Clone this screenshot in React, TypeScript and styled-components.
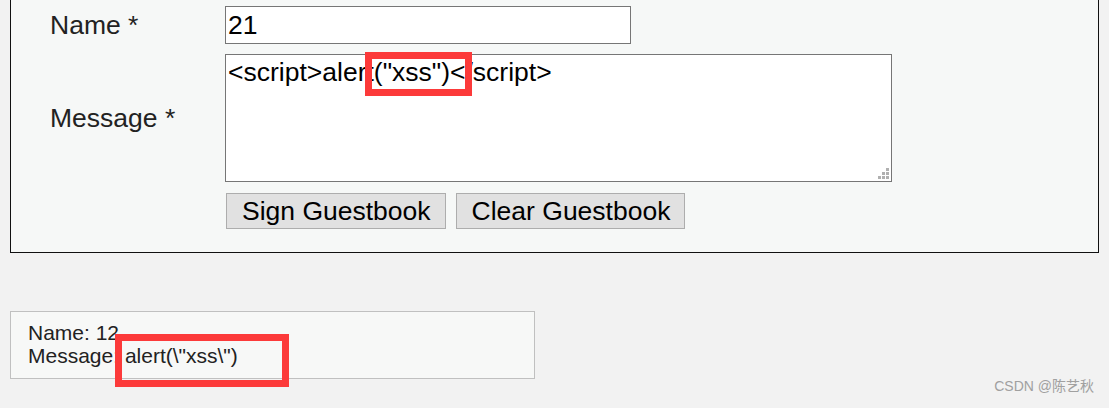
import * as React from 'react';
import styled, { createGlobalStyle } from 'styled-components';

const GlobalStyle = createGlobalStyle`
  html, body {
    margin: 0;
    padding: 0;
    background: #f2f2f2;
    font-family: "Liberation Sans", Arial, sans-serif;
    color: #222;
  }
`;

const Page = styled.div`
  position: relative;
  height: 408px;
  padding: 0 10px;
  overflow: hidden;
  box-sizing: border-box;
`;

const FormPanel = styled.div`
  border: 1px solid #111;
  border-top: none;
  background: #f6f8f7;
  padding: 6px 0 23px 39px;
  display: grid;
  grid-template-columns: 175px 1fr;
  row-gap: 10px;
  align-items: center;
`;

const Label = styled.label`
  font-size: 26.5px;
  color: #222;
`;

const Field = styled.div`
  position: relative;
  display: flex;
  justify-self: start;
`;

const TextInput = styled.input`
  width: 406px;
  height: 38px;
  box-sizing: border-box;
  border: 1px solid #767676;
  padding: 1px 2px;
  font-family: "Liberation Sans", Arial, sans-serif;
  font-size: 26.5px;
  color: #000;
  background: #fff;
  outline: none;
`;

const TextArea = styled.textarea`
  width: 667px;
  height: 128px;
  box-sizing: border-box;
  border: 1px solid #767676;
  padding: 2px 2px;
  font-family: "Liberation Sans", Arial, sans-serif;
  font-size: 26.5px;
  line-height: 30px;
  color: #000;
  background: #fff;
  outline: none;
  resize: none;
`;

const Grip = styled.svg`
  position: absolute;
  right: 3px;
  bottom: 3px;
  width: 11px;
  height: 11px;
  fill: #b0b0b0;
`;

const Buttons = styled.div`
  grid-column: 2;
  display: flex;
  gap: 10px;
  padding-left: 1px;
  padding-top: 1px;
`;

const Button = styled.button`
  height: 36px;
  box-sizing: border-box;
  padding: 0 14px 0 15px;
  border: 1px solid #adadad;
  background: #e1e1e1;
  font-family: "Liberation Sans", Arial, sans-serif;
  font-size: 26.5px;
  color: #000;
  line-height: 1;
`;

const Highlight = styled.div<{ $left: number; $top: number; $w: number; $h: number }>`
  position: absolute;
  left: ${p => p.$left}px;
  top: ${p => p.$top}px;
  width: ${p => p.$w}px;
  height: ${p => p.$h}px;
  box-sizing: border-box;
  border: 7px solid #fc3a3a;
  pointer-events: none;
`;

const Entry = styled.div`
  position: relative;
  margin-top: 58px;
  width: 525px;
  box-sizing: border-box;
  border: 1px solid #c0c0c0;
  background: #f7f8f7;
  padding: 9px 17px 11px;
  font-size: 21px;
  line-height: 23px;
  color: #222;
`;

const Watermark = styled.div`
  position: absolute;
  right: 15px;
  bottom: 13px;
  font-family: "Liberation Sans", "Noto Sans CJK SC", sans-serif;
  font-size: 14px;
  color: #a0a0a0;
`;

const ResizeGrip = () => (
  <Grip viewBox="0 0 11 11">
    <rect x="8" y="0" width="3" height="3" />
    <rect x="4" y="4" width="3" height="3" />
    <rect x="8" y="4" width="3" height="3" />
    <rect x="0" y="8" width="3" height="3" />
    <rect x="4" y="8" width="3" height="3" />
    <rect x="8" y="8" width="3" height="3" />
  </Grip>
);

export default function App() {
  return (
    <Page>
      <GlobalStyle />
      <FormPanel>
        <Label>Name *</Label>
        <Field>
          <TextInput defaultValue="21" />
        </Field>
        <Label>Message *</Label>
        <Field>
          <TextArea defaultValue={'<script>alert("xss")</script>'} />
          <ResizeGrip />
          <Highlight $left={140} $top={-2} $w={107} $h={44} />
        </Field>
        <Buttons>
          <Button>Sign Guestbook</Button>
          <Button>Clear Guestbook</Button>
        </Buttons>
      </FormPanel>
      <Entry>
        <div>Name: 12</div>
        <div>Message: alert(\"xss\")</div>
        <Highlight $left={104} $top={22} $w={174} $h={53} />
      </Entry>
      <Watermark>CSDN @陈艺秋</Watermark>
    </Page>
  );
}
